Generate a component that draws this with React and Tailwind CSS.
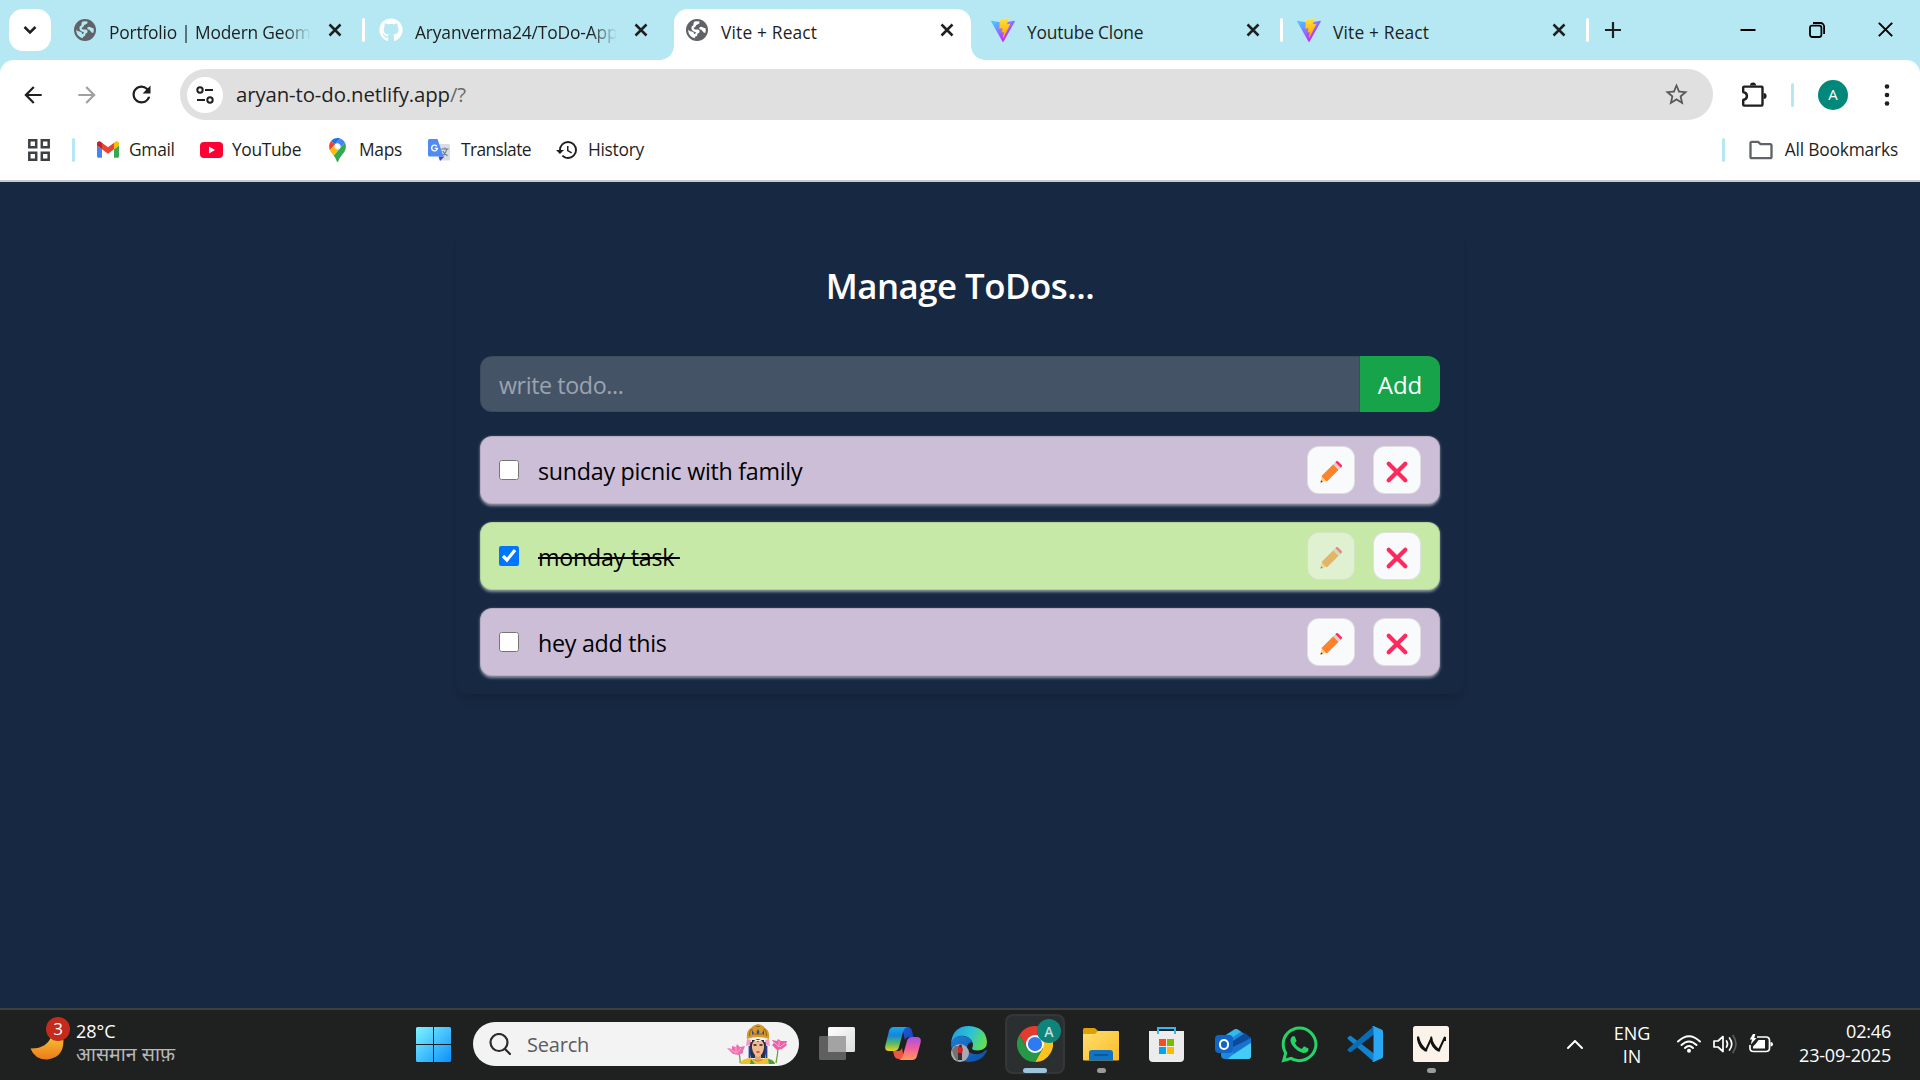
import { MdArrowBack, MdArrowForward, MdRefresh, MdStarBorder, MdHistory, MdOutlineFolder } from "react-icons/md";
import { FaGithub, FaWhatsapp } from "react-icons/fa";

function ViteIcon() {
  return (
    <svg viewBox="0 0 256 257" className="h-6 w-6" aria-hidden="true">
      <defs>
        <linearGradient id="viteA" x1="-.828%" x2="57.636%" y1="7.652%" y2="78.411%">
          <stop offset="0%" stopColor="#41D1FF" />
          <stop offset="100%" stopColor="#BD34FE" />
        </linearGradient>
        <linearGradient id="viteB" x1="43.376%" x2="50.316%" y1="2.242%" y2="89.03%">
          <stop offset="0%" stopColor="#FFEA83" />
          <stop offset="8.333%" stopColor="#FFDD35" />
          <stop offset="100%" stopColor="#FFA800" />
        </linearGradient>
      </defs>
      <path fill="url(#viteA)" d="M255.153 37.938L134.897 252.976c-2.483 4.44-8.862 4.466-11.382.048L.875 37.958c-2.746-4.814 1.371-10.646 6.827-9.67l120.385 21.517a6.537 6.537 0 0 0 2.322-.004l117.867-21.483c5.438-.991 9.574 4.796 6.877 9.62Z" />
      <path fill="url(#viteB)" d="M185.432.063L96.44 17.501a3.268 3.268 0 0 0-2.634 3.014l-5.474 92.456a3.268 3.268 0 0 0 3.997 3.378l24.777-5.718c2.318-.535 4.413 1.507 3.936 3.838l-7.361 36.047c-.495 2.426 1.782 4.5 4.151 3.78l15.304-4.649c2.372-.72 4.652 1.36 4.15 3.788l-11.698 56.621c-.732 3.542 3.979 5.473 5.943 2.437l1.313-2.028l72.516-144.72c1.215-2.423-.88-5.186-3.54-4.672l-25.505 4.922c-2.396.462-4.435-1.77-3.759-4.114l16.646-57.705c.677-2.35-1.37-4.583-3.769-4.113Z" />
    </svg>
  );
}

const tabs = [
  { title: "Portfolio | Modern Geom", icon: "globe", sep: true, fade: true, spacing: "tracking-[-0.2px]" },
  { title: "Aryanverma24/ToDo-App", icon: "github", fade: true, spacing: "tracking-[-0.15px]" },
  { title: "Vite + React", icon: "globe", active: true, spacing: "tracking-[0.15px]" },
  { title: "Youtube Clone", icon: "vite", sep: true, spacing: "tracking-[-0.2px]" },
  { title: "Vite + React", icon: "vite", sep: true, spacing: "tracking-[0.15px]" },
];

function GlobeIcon({ active }) {
  return (
    <svg viewBox="0 0 22 22" className={active ? "-ml-px h-[22px] w-[22px] text-white" : "-ml-px h-[22px] w-[22px] text-[#b5e8f2]"}>
      <circle cx="11" cy="11" r="11" fill="#5f6368" />
      <path
        fill="currentColor"
        d="M8.500 2.600Q11 1.800 13.500 2.400Q14 4.500 12 5.200Q9.800 5.600 9.600 7.200Q9.400 8.600 7.600 8.800Q7.600 10.400 9.200 10.600H12.200Q13.800 11 13.600 13Q13.200 14.200 11.600 14.400Q11.600 17 9.400 17.600L8.600 19.300Q3.200 17.600 2.300 12.400L2.300 10.500Q3.400 12.400 5.600 12.600Q8 13 8.400 15.200Q10 14.600 9.800 12.900Q6.200 12.800 5.400 9.400Q5 7 7.400 6.200Q7.200 4 8.500 2.600z"
      />
      <path fill="currentColor" d="M13.600 8.200Q15.400 7.200 17 8.400L19.700 9.500Q20 12 19.200 14Q17.400 14 16.600 12.200Q16 10.600 13.800 10.300Q12.600 9.200 13.600 8.200z" />
    </svg>
  );
}

function TabIcon({ name, active }) {
  if (name === "globe") return <GlobeIcon active={active} />;
  if (name === "github") return <FaGithub className="h-6 w-6 text-white" />;
  return <ViteIcon />;
}

function Cross({ className, width = 2.5 }) {
  return (
    <svg viewBox="0 0 14 14" className={className} fill="none" stroke="currentColor" strokeWidth={width}>
      <path d="M1.5 1.5l11 11M12.5 1.5l-11 11" />
    </svg>
  );
}

function Tab({ title, icon, active, sep, fade, spacing }) {
  return (
    <div className="relative flex h-[60px] w-[306px] shrink-0 pt-[9px]">
      {active && (
        <div className="absolute left-[-10px] top-[9px] flex h-[51px] items-end">
          <div className="h-3.5 w-3.5 bg-[radial-gradient(circle_at_0_0,transparent_13.5px,white_14px)]"></div>
          <div className="h-[51px] w-[297px] rounded-t-[14px] bg-white"></div>
          <div className="h-3.5 w-3.5 bg-[radial-gradient(circle_at_100%_0,transparent_13.5px,white_14px)]"></div>
        </div>
      )}
      <div className="relative flex h-[42px] flex-1 items-center pl-[15px] pr-[22px]">
        <div className="flex w-6 justify-center">
          <TabIcon name={icon} active={active} />
        </div>
        <div
          className={
            "ml-3 mt-[3px] h-7 w-[204px] whitespace-nowrap text-[17.4px] leading-7 text-[#1f1f1f] " +
            spacing +
            (fade ? " [mask-image:linear-gradient(to_right,black_86%,transparent_99%)]" : "")
          }
        >
          {title}
        </div>
        <Cross className="ml-auto h-[14px] w-[14px] text-[#1f1f1f]" />
      </div>
      {sep && <div className="absolute right-[-1px] top-[18px] h-6 w-[3px] rounded-full bg-white"></div>}
    </div>
  );
}

function TabStrip() {
  return (
    <div className="flex h-[60px] bg-[#b5e8f2]">
      <div className="mx-[9px] mt-[9px] flex h-[42px] w-[42px] items-center justify-center rounded-[14px] bg-white">
        <svg viewBox="0 0 14 10" className="h-[10px] w-[14px]" fill="none" stroke="#1f1f1f" strokeWidth="2.5">
          <path d="M1.5 2l5.5 5.5L12.5 2" />
        </svg>
      </div>
      <div className="-ml-[2px] flex">
        {tabs.map((t, i) => (
          <Tab key={i} {...t} />
        ))}
      </div>
      <svg viewBox="0 0 16 16" className="ml-[17px] mt-[22px] h-4 w-4" stroke="#1f1f1f" strokeWidth="2.2">
        <path d="M8 0v16M0 8h16" />
      </svg>
      <div className="ml-auto mr-[26px] mt-[21px] flex h-[17px] items-center gap-[53px] text-black">
        <svg viewBox="0 0 16 16" className="h-4 w-4" stroke="currentColor" strokeWidth="2">
          <path d="M0.5 8h15" />
        </svg>
        <svg viewBox="0 0 16 16" className="-mr-px h-4 w-4" fill="none" stroke="currentColor" strokeWidth="1.8">
          <rect x="1" y="3.6" width="11.4" height="11.4" rx="2.2" />
          <path d="M4 1h7.5a3.6 3.6 0 0 1 3.6 3.6V12" />
        </svg>
        <Cross className="h-[17px] w-[17px]" width={1.6} />
      </div>
    </div>
  );
}

function AddressBar() {
  return (
    <div className="flex h-[69px] items-center rounded-t-[14px] bg-white">
      <div className="flex w-[180px] items-center pl-[20px] text-[#1f1f1f]">
        <MdArrowBack className="h-[26px] w-[26px]" />
        <MdArrowForward className="ml-[28px] h-[26px] w-[26px] text-[#a0a0a0]" />
        <MdRefresh className="ml-[28px] h-[27px] w-[27px]" />
      </div>
      <div className="flex h-[51px] w-[1533px] items-center rounded-full bg-[#e0e0e0] pl-[7px] pr-[23px]">
        <div className="flex h-9 w-9 items-center justify-center rounded-full bg-white">
          <svg viewBox="0 0 20 20" className="h-5 w-5" fill="none" stroke="#1f1f1f" strokeWidth="2">
            <circle cx="5" cy="5" r="2.7" />
            <path d="M10 5h8M2 15h8" />
            <circle cx="15" cy="15" r="2.7" />
          </svg>
        </div>
        <div className="-mt-0.5 ml-[13px] text-[20.4px] leading-8 tracking-[-0.12px] text-[#1f1f1f]">
          aryan-to-do.netlify.app<span className="text-[#6b6b6b]">/?</span>
        </div>
        <MdStarBorder className="ml-auto h-[27px] w-[27px] text-[#5a5a5a]" />
      </div>
      <svg viewBox="0 0 26 26" className="ml-[28px] h-[26px] w-[26px]" fill="none" stroke="#1f1f1f" strokeWidth="2.4" strokeLinejoin="round">
        <path d="M3.200 4.600H20.500a1 1 0 0 1 1 1V22.600a1 1 0 0 1-1 1H3.200a1 1 0 0 1-1-1V18c5-1 5-7 0-8V5.600a1 1 0 0 1 1-1z" />
        <path d="M9 3.600a3 3 0 0 1 6 0zM22.600 11a3 3 0 0 1 0 6z" fill="#1f1f1f" stroke="none" />
      </svg>
      <div className="ml-[24px] h-6 w-[3px] rounded-full bg-[#b5e8f2]"></div>
      <div className="ml-[24px] flex h-[30px] w-[30px] items-center justify-center rounded-full bg-[#00897b] text-[15px] text-white">A</div>
      <svg viewBox="0 0 6 26" className="ml-[36px] h-[26px] w-[6px]" fill="#1f1f1f">
        <circle cx="3" cy="4.500" r="2.300" />
        <circle cx="3" cy="13" r="2.300" />
        <circle cx="3" cy="21.500" r="2.300" />
      </svg>
    </div>
  );
}

function GmailIcon() {
  return (
    <svg viewBox="52 42 88 66" className="h-[17px] w-[22px]">
      <path fill="#4285f4" d="M58 108h14V74L52 59v43c0 3.320 2.690 6 6 6" />
      <path fill="#34a853" d="M120 108h14c3.320 0 6-2.690 6-6V59l-20 15" />
      <path fill="#fbbc04" d="M120 48v26l20-15v-8c0-7.420-8.470-11.650-14.400-7.200" />
      <path fill="#ea4335" d="M72 74V48l24 18 24-18v26L96 92" />
      <path fill="#c5221f" d="M52 51v8l20 15V48l-5.600-4.200c-5.940-4.450-14.400-.22-14.400 7.200" />
    </svg>
  );
}

function YouTubeIcon() {
  return (
    <svg viewBox="0 0 23 16" className="h-4 w-[23px]">
      <rect width="23" height="16" rx="4" fill="#ff0033" />
      <path d="M9 4.500l6 3.500-6 3.500z" fill="#fff" />
    </svg>
  );
}

function MapsIcon() {
  return (
    <svg viewBox="0 0 92.300 132.300" className="h-6 w-[17px]">
      <path fill="#1a73e8" d="M60.200 2.200C55.800.8 51 0 46.100 0 32 0 19.300 6.400 10.800 16.500l21.800 18.300L60.200 2.200z" />
      <path fill="#ea4335" d="M10.800 16.500C4.100 24.500 0 34.900 0 46.100c0 8.700 1.700 15.700 4.600 22l28-33.300-21.800-18.300z" />
      <path fill="#4285f4" d="M46.200 28.500c9.800 0 17.700 7.900 17.700 17.700 0 4.300-1.600 8.300-4.200 11.400 0 0 13.900-16.600 27.500-32.700-5.600-10.800-15.300-19-27-22.700L32.600 34.800c3.300-3.800 8.100-6.300 13.600-6.300" />
      <path fill="#fbbc04" d="M46.200 63.800c-9.800 0-17.700-7.900-17.700-17.700 0-4.300 1.500-8.300 4.100-11.300l-28 33.300c4.800 10.600 12.800 19.200 21 29.900l34.100-40.500c-3.300 3.900-8.100 6.300-13.500 6.300" />
      <path fill="#34a853" d="M59.100 109.200c15.400-24.100 33.300-35 33.300-63 0-7.700-1.900-14.900-5.200-21.300L25.600 98c2.600 3.400 5.300 7.300 7.900 11.300 9.400 14.500 6.800 23.100 12.800 23.100s3.400-8.700 12.800-23.200" />
    </svg>
  );
}

function TranslateIcon() {
  return (
    <svg viewBox="0 0 22 22" className="h-[22px] w-[22px]">
      <path d="M8 5h12.500a1.500 1.500 0 0 1 1.500 1.500V20a1.500 1.500 0 0 1-1.500 1.500H12z" fill="#dadce0" />
      <path d="M10.500 17.500h6L12 22z" fill="#3c4bb8" />
      <path d="M1.500 0H9.500l6 17.500h-14A1.500 1.500 0 0 1 0 16V1.500A1.500 1.500 0 0 1 1.500 0z" fill="#4f8bf5" />
      <path d="M8.800 7.200a2.900 2.900 0 1 0 .6 2.200H6.700" stroke="#fff" strokeWidth="1.400" fill="none" />
      <path d="M13.300 10h7.200M16.800 8.500V10M19 10c-.7 3-2.600 5.300-4.500 6.500M14.800 12c1 2 2.700 3.700 4.700 4.800" stroke="#607988" strokeWidth="1.100" fill="none" />
    </svg>
  );
}

function Bookmark({ icon, label, className }) {
  return (
    <div className={"flex items-center " + className}>
      {icon}
      <span className="-mt-px">{label}</span>
    </div>
  );
}

function BookmarksBar() {
  return (
    <div className="flex h-[53px] items-center border-b-2 border-[#c9cbce] bg-white pb-px pl-7 text-[17.4px] text-[#1f1f1f]">
      <svg viewBox="0 0 22 22" className="-mt-2 h-[22px] w-[22px]" fill="none" stroke="#3c4043" strokeWidth="2.500">
        <path d="M1.300 1.300h6.900v6.900H1.300zM13.800 1.300h6.900v6.900h-6.900zM1.300 13.800h6.900v6.900H1.300zM13.800 13.800h6.900v6.900h-6.900z" />
      </svg>
      <div className="-mt-2 ml-[22px] h-6 w-[3px] rounded-full bg-[#b5e8f2]"></div>
      <div className="-mt-2 flex flex-1 items-center">
        <Bookmark className="ml-[22px] w-[103px] gap-[10px] tracking-[-0.3px]" icon={<GmailIcon />} label="Gmail" />
        <Bookmark className="w-[129px] gap-[9px] tracking-[-0.35px]" icon={<YouTubeIcon />} label="YouTube" />
        <Bookmark className="w-[99px] gap-[13px] tracking-[-0.3px]" icon={<MapsIcon />} label="Maps" />
        <Bookmark className="w-[127px] gap-[11px] tracking-[-0.6px]" icon={<TranslateIcon />} label="Translate" />
        <Bookmark className="gap-[9px] tracking-[-0.3px]" icon={<MdHistory className="h-[24px] w-[24px]" />} label="History" />
        <div className="ml-auto mr-[22px] h-6 w-[3px] rounded-full bg-[#b5e8f2]"></div>
        <Bookmark
          className="mr-[22px] gap-[10px] tracking-[-0.2px]"
          icon={<MdOutlineFolder className="h-[28px] w-[28px] text-[#5f6368]" />}
          label="All Bookmarks"
        />
      </div>
    </div>
  );
}

function Pencil() {
  return (
    <svg viewBox="0 0 24 24" className="mt-[3px] mr-px h-6 w-6">
      <path d="M1.500 22.500L3 15.500 8.500 20.500z" fill="#ffce7c" />
      <path d="M1.500 22.500l.6-2.200 1.600 1.600z" fill="#402a32" />
      <path d="M3 15.600L14.300 4.300l5.400 5.400L8.400 21q-.6.600-1.200 0L3 16.800q-.6-.6 0-1.200z" fill="#ff822d" />
      <path d="M14.300 4.300L16.300 2.300l5.400 5.400-2 2z" fill="#d3d3d3" />
      <path d="M16.300 2.300l1-1q.8-.8 1.600 0l3.800 3.800q.8.800 0 1.600l-1 1z" fill="#fe2a5c" />
    </svg>
  );
}

function RedCross() {
  return (
    <svg viewBox="0 0 24 24" className="mt-[3px] h-6 w-6" stroke="#fe295c" strokeWidth="4.200" strokeLinecap="round">
      <path d="M3.700 3.700l16.600 16.600M20.300 3.700L3.700 20.300" />
    </svg>
  );
}

const todos = [
  { text: "sunday picnic with family", done: false },
  { text: "monday task ", done: true },
  { text: "hey add this", done: false },
];

function TodoItem({ text, done }) {
  const box = "flex h-12 w-12 items-center justify-center rounded-xl border border-black/10 bg-[#f9fafb]";
  return (
    <div
      className={
        "flex h-[68px] items-center rounded-xl border border-black/10 px-[18px] shadow-[0_1.5px_3px_rgba(255,255,255,0.5)] " +
        (done ? "bg-[#c6e9a7]" : "bg-[#ccbed7]")
      }
    >
      <input type="checkbox" checked={done} readOnly className="h-5 w-5" />
      <div className="ml-[19px] flex-1 text-[23.250px] leading-9 tracking-[-0.27px] text-black">
        <span className={done ? "mt-0.5 inline-block whitespace-pre line-through" : "mt-0.5 inline-block"}>{text}</span>
      </div>
      <button className={done ? box + " opacity-50" : box}>
        <Pencil />
      </button>
      <button className={box + " ml-[18px]"}>
        <RedCross />
      </button>
    </div>
  );
}

function TodoPage() {
  return (
    <main className="h-[826px] bg-[#172842] pt-12">
      <div className="mx-auto w-[1008px] rounded-xl px-6 py-[18px] shadow-[0_8px_10px_-3px_rgba(0,0,0,0.1),0_3px_6px_-3px_rgba(0,0,0,0.08)]">
        <h1 className="mb-[46px] mt-3.5 text-center text-[34.800px] leading-[48px] font-semibold tracking-[-0.5px] text-white">Manage ToDos...</h1>
        <div className="flex h-14">
          <div className="flex flex-1 items-center rounded-l-xl border border-black/10 bg-white/20 bg-clip-border px-[18px] pt-0.5 text-[23.250px] tracking-[-0.4px] text-[#9ca3af]">
            write todo...
          </div>
          <button className="w-20 rounded-r-xl bg-[#16a34a] pt-0.5 text-2xl text-white">Add</button>
        </div>
        <div className="mt-6 flex flex-col gap-[18px]">
          {todos.map((t) => (
            <TodoItem key={t.text} {...t} />
          ))}
        </div>
      </div>
    </main>
  );
}

function WindowsIcon() {
  return (
    <svg viewBox="0 0 35 35" className="h-[35px] w-[35px]">
      <defs>
        <linearGradient id="win" x1="0" y1="0" x2="35" y2="35" gradientUnits="userSpaceOnUse">
          <stop offset="0" stopColor="#7ff3ff" />
          <stop offset="1" stopColor="#0c90fb" />
        </linearGradient>
      </defs>
      <path fill="url(#win)" d="M1.500 0H17v17H0V1.500A1.500 1.500 0 0 1 1.500 0zM18 0h15.500A1.500 1.500 0 0 1 35 1.500V17H18zM0 18h17v17H1.500A1.500 1.500 0 0 1 0 33.500zM18 18h17v15.500a1.500 1.500 0 0 1-1.500 1.500H18z" />
    </svg>
  );
}

function GoddessIcon() {
  return (
    <svg viewBox="0 0 61 40" className="h-10 w-[61px]">
      <path d="M11.500 28q2 5 1.500 11M51 22q0 8-2 17" stroke="#6fa03a" strokeWidth="1.300" fill="none" />
      <path d="M0 24l5 1 0-3 4 1 1-3 3 3 5-1-2 5 0 2-4 2-6-1z" fill="#ee6fb0" />
      <path d="M3 25l6 4M9 23v6M14 24l-4 5" stroke="#f8a9d0" strokeWidth="1" />
      <path d="M45 21l2-2-2-3 5 1 1-2 3 2 6 0-1 3 1 1-5 4-5 1z" fill="#ee5fa8" />
      <path d="M47 18l5 5M52 17v6M58 19l-5 4" stroke="#f8a9d0" strokeWidth="1" />
      <path d="M23 18q-1 10 1 16h14q2-8 1-16z" fill="#28304c" />
      <path d="M13 40q1-5 10-6l8 3 8-3q8 1 9 6z" fill="#f0c02b" />
      <path d="M41 35q6 1 7 5h-6zM23 40l1-5 4 5z" fill="#3aa24f" />
      <path d="M28 29h6v7l-3 2-3-2z" fill="#dfa077" />
      <path d="M25 17h12v7q-1 7-6 9-5-2-6-9z" fill="#eebb92" />
      <path d="M25 21q1-5 6-6 5 1 6 6v-5H25z" fill="#33242a" />
      <path d="M20 15q-1-9 4-11 2-3 7-4 5 1 7 4 5 2 4 11-5-2-11-2t-11 2z" fill="#d49a2a" />
      <path d="M22.500 12q0-6 3-7M39.500 12q0-6-3-7M25 10h12M29 2.500h4" stroke="#9a671a" strokeWidth="1.200" fill="none" />
      <path d="M31 5l1.500 3-1.500 3-1.500-3zM25 6l2 3-2 2zM37 6l-2 3 2 2z" fill="#3548a0" />
      <path d="M20 15l4 1-1 5-4 1zM42 15l-4 1 1 5 4 1z" fill="#f29ac0" />
      <path d="M26.500 21h3M32.500 21h3" stroke="#2c1a1a" strokeWidth="1.300" />
      <path d="M29.500 28h3" stroke="#c5342f" strokeWidth="1.400" />
      <circle cx="31" cy="17.500" r=".8" fill="#d02020" />
      <path d="M22.500 22v12M39.500 22v12" stroke="#2b479a" strokeWidth="1.800" />
      <path d="M26 35q5 4 10 0" stroke="#c98c1b" strokeWidth="1.200" fill="none" />
    </svg>
  );
}

function TaskViewIcon() {
  return (
    <svg viewBox="0 0 36 36" className="h-9 w-9">
      <defs>
        <linearGradient id="tv" x1="0" y1="0" x2="1" y2="1">
          <stop offset="0" stopColor="#fff" />
          <stop offset="1" stopColor="#dcdcdc" />
        </linearGradient>
      </defs>
      <rect x="9" y="1" width="27" height="25" rx="1.500" fill="url(#tv)" />
      <rect x="0" y="10" width="27" height="24" rx="1.500" fill="#5f5f5f" />
      <path d="M9 10h18v16H9z" fill="#a3a3a3" />
    </svg>
  );
}

function CopilotIcon() {
  return (
    <svg viewBox="0 0 36 36" className="h-9 w-9">
      <defs>
        <linearGradient id="cpA" x1="0" y1="0" x2="0" y2="1">
          <stop offset="0" stopColor="#1aa7ee" />
          <stop offset=".35" stopColor="#1486dc" />
          <stop offset=".7" stopColor="#5dbb62" />
          <stop offset="1" stopColor="#f2cf1d" />
        </linearGradient>
        <linearGradient id="cpB" x1="0" y1="0" x2="0" y2="1">
          <stop offset="0" stopColor="#a44fe8" />
          <stop offset=".5" stopColor="#f0609a" />
          <stop offset="1" stopColor="#ff9a5a" />
        </linearGradient>
        <linearGradient id="cpC" x1="0" y1="0" x2="1" y2="1">
          <stop offset="0" stopColor="#1a5fd8" />
          <stop offset="1" stopColor="#1d3fb8" />
        </linearGradient>
      </defs>
      <path d="M17 1h5q4 0 5 4l1.500 6H24q-3 0-4 3z" fill="url(#cpC)" />
      <path d="M19 33h-5q-4 0-5-4L8 25h5q3 0 4-3z" fill="#f0563f" />
      <path d="M9 1h13q-3 1-4 5l-4 15q-1 4-5 4H4q-5 0-3.500-6L4 5q1-4 5-4z" fill="url(#cpA)" />
      <path d="M27 34H14q3-1 4-5l4-14q1-4 5-4h5q5 0 3.500 6L32 30q-1 4-5 4z" fill="url(#cpB)" />
    </svg>
  );
}

function EdgeIcon() {
  return (
    <svg viewBox="0 0 36 36" className="h-9 w-9">
      <defs>
        <linearGradient id="edA" x1="0" y1="0.300" x2="1" y2="0.600">
          <stop offset="0" stopColor="#1f9fe0" />
          <stop offset=".5" stopColor="#2cc3d5" />
          <stop offset="1" stopColor="#66e04a" />
        </linearGradient>
        <linearGradient id="edB" x1="0" y1="0" x2="1" y2="1">
          <stop offset="0" stopColor="#1a7fd8" />
          <stop offset="1" stopColor="#0f4ba5" />
        </linearGradient>
      </defs>
      <path d="M0 18Q2 9 12 10q8 1 9 6-5 1-5 6 1 7 12 6 4-1 7-4 1 0 1 1-5 11-18 11Q1 35 0 18z" fill="url(#edB)" />
      <path d="M0 17Q2 0 18 0q17 1 18 16 0 8-9 8.500-6 0-6-2.500 1-1 1-4-1-6-8-8Q4 8 0 17z" fill="url(#edA)" />
      <circle cx="9" cy="27" r="9" fill="#a9abb0" />
      <path d="M1 24q2 9 6 11l1-15H4z" fill="#77706f" />
      <path d="M7 21l3-2 2 4-1 5H7z" fill="#d3222b" />
      <path d="M7 27h4l0 7H7z" fill="#33303a" />
      <circle cx="9.500" cy="20" r="1.500" fill="#503028" />
    </svg>
  );
}

function ChromeIcon() {
  return (
    <svg viewBox="0 0 48 48" className="h-9 w-9">
      <path d="M24 12h20.800A24 24 0 0 0 3.200 12l10.400 18z" fill="#e33b2e" />
      <path d="M34.400 30L24 48A24 24 0 0 0 44.800 12H24z" fill="#fcc31e" />
      <path d="M13.600 30L3.200 12A24 24 0 0 0 24 48l10.400-18z" fill="#279847" />
      <circle cx="24" cy="24" r="12" fill="#fff" />
      <circle cx="24" cy="24" r="9.500" fill="#2f7af0" />
    </svg>
  );
}

function ExplorerIcon() {
  return (
    <svg viewBox="0 0 36 36" className="h-9 w-9">
      <defs>
        <linearGradient id="exA" x1="0" y1="0" x2="1" y2="1">
          <stop offset="0" stopColor="#ffdf70" />
          <stop offset="1" stopColor="#fcbc25" />
        </linearGradient>
      </defs>
      <path d="M0 3.500Q0 2 1.500 2H11q1 0 2 1l2 2v6H0z" fill="#dfa006" />
      <path d="M0 8h12l3-3h20q1 0 1 1v27.500q0 1-1 1H1q-1 0-1-1z" fill="url(#exA)" />
      <path d="M6 34.500v-7.500q0-3 3-3h18q3 0 3 3v7.500z" fill="#1173c4" />
      <path d="M11 29h14" stroke="#0b4f91" strokeWidth="1.500" />
    </svg>
  );
}

function StoreIcon() {
  return (
    <svg viewBox="0 0 36 36" className="h-9 w-9">
      <path d="M9 8V2h17v6" fill="none" stroke="#35b8f1" strokeWidth="2" />
      <path d="M0 5h35v27q0 4-4 4H4q-4 0-4-4z" fill="#ececec" />
      <path d="M9 8V5M26 8V5" stroke="#35b8f1" strokeWidth="2" />
      <path d="M10 13h7v7h-7z" fill="#f25022" />
      <path d="M18 13h7v7h-7z" fill="#7fba00" />
      <path d="M10 21h7v7h-7z" fill="#00a4ef" />
      <path d="M18 21h7v7h-7z" fill="#ffb900" />
    </svg>
  );
}

function OutlookIcon() {
  return (
    <div className="relative h-9 w-9">
      <svg viewBox="0 0 36 36" className="h-9 w-9">
        <path d="M6 12L19 3.700q2-1.200 4 0L36 12v18q0 3-3 3H10q-4 0-4-4z" fill="#1e88dc" />
        <path d="M8 11L19 3.700q2-1.200 4 0l3 2L12 15z" fill="#36b7ee" />
        <path d="M18 15L30 7l6 5v2L18 25z" fill="#0c4a9c" />
        <path d="M18 21l18-9v4L18 28z" fill="#1a72cc" />
        <path d="M16 30l20-13v13q0 3-3 3H13z" fill="#43ccf6" />
      </svg>
      <div className="absolute left-0 top-[9px] flex h-[18px] w-[18px] items-center justify-center rounded-sm bg-[#1066c4]">
        <div className="h-[11px] w-[10px] rounded-full border-[2.5px] border-white"></div>
      </div>
    </div>
  );
}

function VsCodeIcon() {
  return (
    <svg viewBox="0 0 36 36" className="h-9 w-9">
      <path d="M.8 11.500l1.600-1.400q.8-.6 1.600 0L27 27.500V36L.8 13q-.7-.7 0-1.500z" fill="#1483cf" />
      <path d="M.8 24.500l1.600 1.400q.8.600 1.600 0L27 8.500V0L.8 23q-.7.700 0 1.500z" fill="#0a6cb5" />
      <path d="M26.500.1L35 3.800q1 .5 1 1.700v25q0 1.200-1 1.700L26.500 35.900q-1 .2-1.500-.6 1.500.5 1.500-1.300V2Q26.500.4 25 .7q.5-.8 1.500-.6z" fill="#29a7f2" />
    </svg>
  );
}

function WIcon() {
  return (
    <svg viewBox="0 0 36 36" className="h-9 w-9">
      <rect width="36" height="36" rx="2.500" fill="#fbf3ea" />
      <path d="M4 10.500l2 0q2 9 8.500 13.500l-1 1.500h-1.500Q5.500 22 4 13.500z" fill="#111" />
      <path d="M17.500 10.500h1.500q1 9 8.500 13.500l-1 1.500H25Q18.500 22 17 15z" fill="#111" />
      <path d="M12.500 25l6-13M25.500 25l6.500-14v4" fill="none" stroke="#111" strokeWidth="2" />
    </svg>
  );
}

function TaskIcon({ children, dot }) {
  return (
    <div className="relative flex h-9 w-9 items-center justify-center">
      {children}
      {dot && <div className="absolute -bottom-[11px] h-[5px] w-[9px] rounded-full bg-[#9a9a9a]"></div>}
    </div>
  );
}

function Taskbar() {
  return (
    <footer className="flex h-[72px] items-center border-t-2 border-[#3e3f3f] bg-[#1f2121] pb-0.5 text-[18px] text-white">
      <div className="flex w-[416px] items-center pl-[30px]">
        <div className="relative h-12 w-[42px]">
          <svg viewBox="0 0 36 26" className="mt-[15px] h-[26px] w-[36px]">
            <defs>
              <linearGradient id="moon" x1="0" y1="0" x2="0" y2="1">
                <stop offset="0" stopColor="#f4c534" />
                <stop offset="1" stopColor="#ee7a1a" />
              </linearGradient>
            </defs>
            <path d="M.5 13.500Q17 14 22 0l11 1Q36 22 17.500 24.500 5 25 .5 13.500z" fill="url(#moon)" />
          </svg>
          <div className="absolute left-[16px] top-[-3px] flex h-6 w-6 items-center justify-center rounded-full bg-[#c42b1c] text-[17px]">3</div>
        </div>
        <div className="-mt-[3px] ml-1 leading-6">
          <div className="h-6">28°C</div>
          <div className="h-6 whitespace-nowrap font-['Noto_Sans_Devanagari','Noto_Sans',sans-serif] text-[19.500px] leading-[27px] text-[#b8b8b8]">आसमान साफ़</div>
        </div>
      </div>
      <WindowsIcon />
      <div className="ml-[22px] flex h-11 w-[326px] items-center rounded-full bg-[#f3f3f3] pl-4 pr-[11px]">
        <svg viewBox="0 0 22 22" className="h-[22px] w-[22px]" fill="none" stroke="#2b2b2b" strokeWidth="2.200" strokeLinecap="round">
          <circle cx="10" cy="9.500" r="8.500" />
          <path d="M16 16l5 5" />
        </svg>
        <span className="ml-4 pt-px text-[20px] tracking-[-0.2px] text-[#5c5c5c]">Search</span>
        <div className="ml-auto">
          <GoddessIcon />
        </div>
      </div>
      <div className="ml-5 flex gap-[30px]">
        <TaskIcon><TaskViewIcon /></TaskIcon>
        <TaskIcon><CopilotIcon /></TaskIcon>
        <TaskIcon><EdgeIcon /></TaskIcon>
        <div className="relative -mx-3 -my-3 flex h-[60px] w-[60px] items-center justify-center rounded-lg border-2 border-[#353737] bg-[#2c2f2f]">
          <ChromeIcon />
          <div className="absolute left-[30px] top-[3px] flex h-6 w-6 items-center justify-center rounded-full bg-[#0d857a] text-[14px] font-semibold text-[#c5dedb]">A</div>
          <div className="absolute -bottom-px h-[5px] w-6 rounded-full bg-[#9cc4dc]"></div>
        </div>
        <TaskIcon dot><ExplorerIcon /></TaskIcon>
        <TaskIcon><StoreIcon /></TaskIcon>
        <TaskIcon><OutlookIcon /></TaskIcon>
        <TaskIcon><FaWhatsapp className="h-[41px] w-[41px] shrink-0 text-[#25d366]" /></TaskIcon>
        <TaskIcon><VsCodeIcon /></TaskIcon>
        <TaskIcon dot><WIcon /></TaskIcon>
      </div>
      <div className="ml-auto mr-[29px] flex items-center">
        <svg viewBox="0 0 16 9" className="h-[9px] w-4" fill="none" stroke="#fff" strokeWidth="2" strokeLinecap="round">
          <path d="M1 8l7-7 7 7" />
        </svg>
        <div className="ml-[29px] mt-px w-10 text-center leading-[23px]">
          <div>ENG</div>
          <div>IN</div>
        </div>
        <svg viewBox="0 0 24 18" className="ml-[25px] h-[18px] w-6" fill="none" stroke="#fff" strokeWidth="1.900" strokeLinecap="round">
          <path d="M1 6.500q11-10.500 22 0M4.500 10q7.500-7 15 0M8 13q4-4 8 0" />
          <circle cx="12" cy="15.700" r="2" fill="#fff" stroke="none" />
        </svg>
        <svg viewBox="0 0 24 20" className="ml-3 h-5 w-6" fill="none" stroke="#fff" strokeWidth="1.700" strokeLinecap="round" strokeLinejoin="round">
          <path d="M1 7v6h4l5 4.500V2.500L5 7z" />
          <path d="M13.500 7q2 3 0 6M16.500 4q4.500 6 0 12" />
          <path d="M20 1.500q6 8.500 0 17" stroke="#5a5a5a" />
        </svg>
        <svg viewBox="0 0 24 20" className="ml-3 h-5 w-6" fill="none">
          <path d="M8 3h9q3.500 0 3.500 3.500v7.500q0 3.500-3.500 3.500H4.500q-3.500 0-3.500-3.500V11" stroke="#fff" strokeWidth="1.700" />
          <path d="M9.500 6h6.500v8.500H4V12.500L7 9.500z" fill="#fff" />
          <path d="M21.500 8q2.500 0 2.500 2.300t-2.500 2.300z" fill="#fff" />
          <path d="M4.500-1L.8 5.500H3L1.800 10.500 7.500 4H5.200L6.700-1z" fill="#fff" />
        </svg>
        <div className="-mt-[2px] ml-[26px] w-[92px] whitespace-nowrap text-right leading-6 tracking-[-0.2px]">
          <div>02:46</div>
          <div>23-09-2025</div>
        </div>
      </div>
    </footer>
  );
}

export default function App() {
  return (
    <div className="h-[1080px] w-[1920px] overflow-hidden bg-[#b5e8f2] font-['Open_Sans','Noto_Sans',sans-serif]">
      <TabStrip />
      <AddressBar />
      <BookmarksBar />
      <TodoPage />
      <Taskbar />
    </div>
  );
}
